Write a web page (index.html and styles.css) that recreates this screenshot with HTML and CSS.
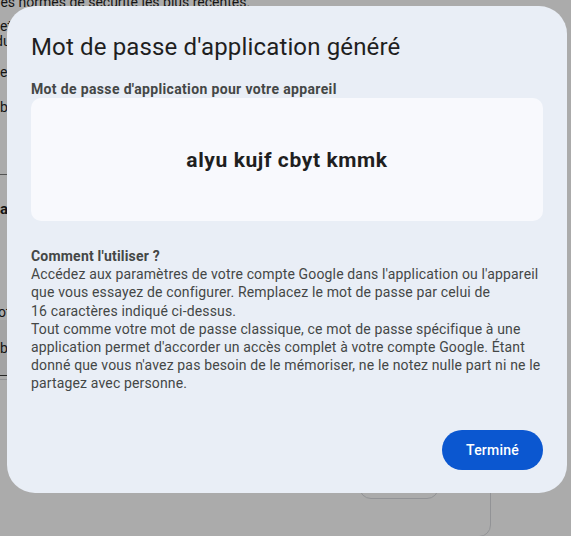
FILE: index.html
```html
<!DOCTYPE html>
<html lang="fr">
<head>
<meta charset="utf-8">
<title>Mot de passe d'application généré</title>
<link rel="stylesheet" href="styles.css">
</head>
<body>
<div class="page">
  <p class="page-line first">les normes de sécurité les plus récentes.</p>
  <p class="page-line l2">et</p>
  <p class="page-line l3">du</p>
  <p class="page-line l4">en</p>
  <p class="page-line l5">bl</p>
  <div class="page-rule"></div>
  <p class="page-line strong l6">a</p>
  <p class="page-line l7">ot</p>
  <div class="page-row"><span>bl</span></div>
  <div class="page-card">
    <div class="page-btn"></div>
  </div>
</div>

<div class="scrim">
  <div class="dialog" role="dialog" aria-labelledby="dlg-title">
    <h1 id="dlg-title" class="dialog-title">Mot de passe d'application généré</h1>
    <div class="field-label">Mot de passe d'application pour votre appareil</div>
    <div class="password-box">
      <span class="password">alyu kujf cbyt kmmk</span>
    </div>
    <div class="howto">
      <div class="howto-title">Comment l'utiliser ?</div>
      <div class="howto-text">Accédez aux paramètres de votre compte Google dans l'application ou l'appareil que vous essayez de configurer. Remplacez le mot de passe par celui de 16&nbsp;caractères indiqué ci-dessus.</div>
      <div class="howto-text">Tout comme votre mot de passe classique, ce mot de passe spécifique à une application permet d'accorder un accès complet à votre compte Google. Étant donné que vous n'avez pas besoin de le mémoriser, ne le notez nulle part ni ne le partagez avec personne.</div>
    </div>
    <div class="actions">
      <button class="btn-primary" type="button">Terminé</button>
    </div>
  </div>
</div>
</body>
</html>
```

FILE: styles.css
```css
* { box-sizing: border-box; }

html, body {
  margin: 0;
  padding: 0;
  width: 571px;
  height: 536px;
  overflow: hidden;
}

body {
  background: #ffffff;
  font-family: Roboto, "Liberation Sans", sans-serif;
  color: #1f1f1f;
}

/* Underlying page (mostly hidden by the dialog) */
.page {
  margin-top: -6px;
  font-size: 14px;
  line-height: 16px;
  color: #1f1f1f;
}

.page-line {
  margin: 0;
  white-space: nowrap;
  height: 16px;
}

.page-line.first { margin-left: -3px; }
.page-line.l2 { margin-top: 8px; }
.page-line.l3 { margin-top: -1px; margin-left: -5px; }
.page-line.l4 { margin-top: 15px; }
.page-line.l5 { margin-top: 19px; }

.page-rule {
  margin-top: 59px;
  height: 1px;
  background: #7d7d7d;
  width: 120px;
}

.page-line.strong {
  font-weight: 700;
  margin-top: 26px;
  font-size: 15px;
}

.page-line.l7 { margin-top: 87px; margin-left: -2px; }

.page-row {
  height: 56px;
  background: #f3f4f5;
  border-bottom: 1px solid #3a3a3a;
  display: flex;
  align-items: center;
  width: 200px;
}

.page-card {
  margin-top: 3px;
  margin-left: -20px;
  width: 511px;
  height: 158px;
  border: 1px solid #dadce0;
  border-radius: 12px;
  display: flex;
  justify-content: flex-end;
  align-items: flex-end;
  padding: 0 51px 37px 0;
}

.page-btn {
  width: 80px;
  height: 40px;
  border: 1px solid #dadce0;
  border-radius: 12px;
}

/* Modal */
.scrim {
  position: fixed;
  inset: 0;
  background: rgba(0, 0, 0, 0.33);
  display: flex;
  align-items: flex-start;
  padding: 6px 0 0 7px;
}

.dialog {
  width: 560px;
  height: 487px;
  background: #e9eef6;
  border-radius: 28px;
  padding: 25px 24px 23px 24px;
  display: flex;
  flex-direction: column;
}

.dialog-title {
  margin: 0;
  font-family: Roboto, "Liberation Sans", sans-serif;
  font-weight: 400;
  font-size: 24px;
  line-height: 32px;
  letter-spacing: 0.15px;
  color: #1f1f1f;
}

.field-label {
  margin-top: 18px;
  font-size: 14px;
  font-weight: 700;
  line-height: 17px;
  letter-spacing: 0.35px;
  color: #444746;
}

.password-box {
  margin-top: 0;
  height: 123px;
  background: #f8f9fd;
  border-radius: 10px;
  display: flex;
  align-items: center;
  justify-content: center;
}

.password {
  font-size: 21px;
  font-weight: 700;
  letter-spacing: 0.6px;
  color: #1f1f1f;
}

.howto {
  margin-top: 26px;
  font-size: 14px;
  line-height: 18.2px;
  letter-spacing: 0.15px;
  color: #444746;
}

.howto-title {
  font-weight: 700;
  letter-spacing: 0.2px;
}

.actions {
  margin-top: auto;
  display: flex;
  justify-content: flex-end;
}

.btn-primary {
  height: 40px;
  width: 101px;
  border: none;
  border-radius: 20px;
  background: #0b57d0;
  color: #ffffff;
  font-family: Roboto, "Liberation Sans", sans-serif;
  font-size: 14px;
  font-weight: 500;
  letter-spacing: 0.2px;
  cursor: pointer;
}
```
